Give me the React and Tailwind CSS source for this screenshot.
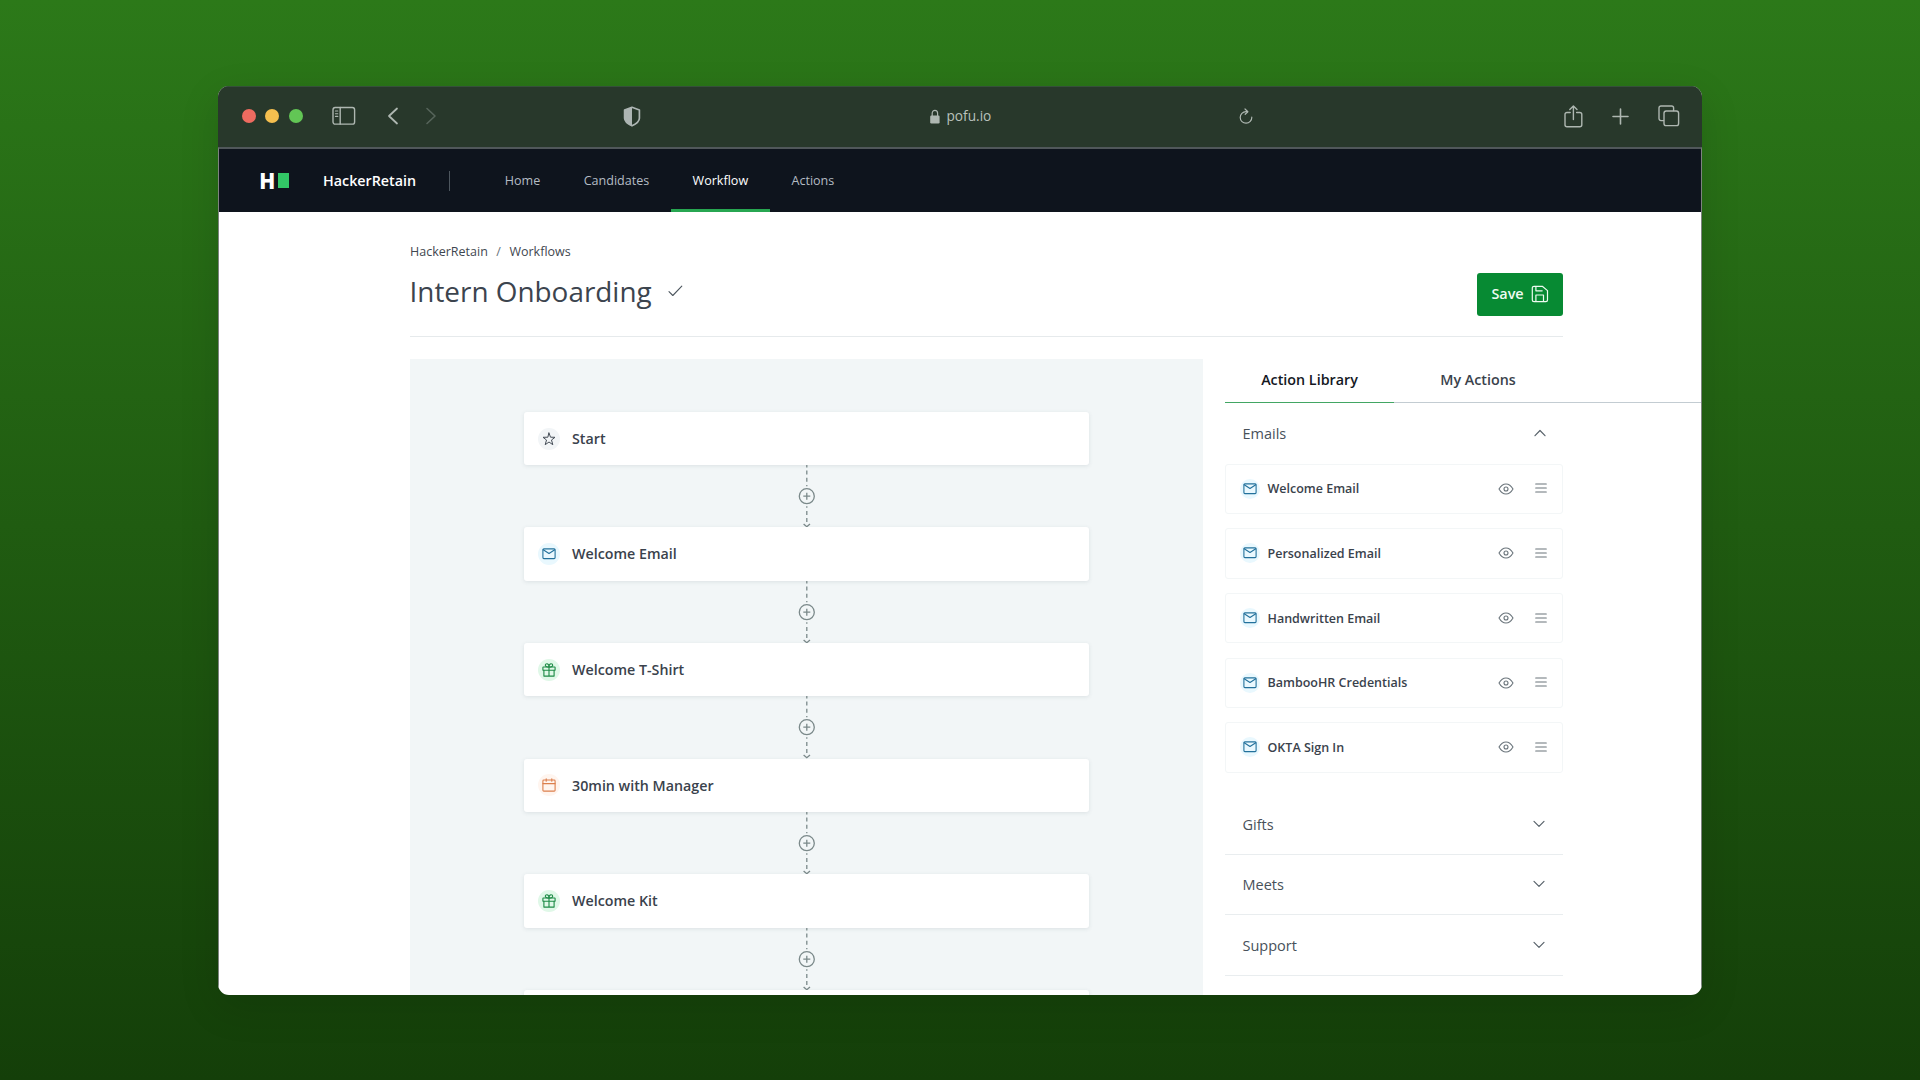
import React from "react";

const NAV = ["Home", "Candidates", "Workflow", "Actions"];

const STEPS = [
  { label: "Start", kind: "start" },
  { label: "Welcome Email", kind: "email" },
  { label: "Welcome T-Shirt", kind: "gift" },
  { label: "30min with Manager", kind: "meet" },
  { label: "Welcome Kit", kind: "gift" },
];

const EMAILS = [
  "Welcome Email",
  "Personalized Email",
  "Handwritten Email",
  "BambooHR Credentials",
  "OKTA Sign In",
];

const SECTIONS = ["Gifts", "Meets", "Support"];

function Icon({ w, h, sw = 1.2, className = "", children }) {
  return (
    <svg
      width={w}
      height={h}
      viewBox={`0 0 ${w} ${h}`}
      fill="none"
      stroke="currentColor"
      strokeWidth={sw}
      strokeLinecap="round"
      strokeLinejoin="round"
      className={`shrink-0 ${className}`}
    >
      {children}
    </svg>
  );
}

function MailIcon() {
  return (
    <Icon w={14} h={14} sw={1.1}>
      <rect x="0.9" y="1.9" width="12.2" height="9.7" rx="1" />
      <path d="M1.2 2.7 7 6.5l5.8-3.8" />
    </Icon>
  );
}

function GiftIcon() {
  return (
    <Icon w={14} h={14} sw={1.1}>
      <rect x="0.9" y="4" width="12.2" height="3.3" rx="0.4" />
      <path d="M1.9 7.3v5.8h10.2V7.3M7 4v9.1" />
      <path d="M7 4C5.8 4 3.3 3.9 3.3 2.2 3.3 1.2 4.1.7 4.9.7 6.3.7 7 2.4 7 4c0-1.6.7-3.3 2.1-3.3.8 0 1.6.5 1.6 1.5C10.7 3.9 8.2 4 7 4z" />
    </Icon>
  );
}

function CalendarIcon() {
  return (
    <Icon w={14} h={14} sw={1.1}>
      <rect x="0.9" y="2" width="12.2" height="11.1" rx="0.9" />
      <path d="M.9 5.6h12.2M4.2.7v2.5M9.8.7v2.5" />
    </Icon>
  );
}

function StarIcon() {
  return (
    <Icon w={14} h={14} sw={1}>
      <path d="M7 1 8.5 5.2 13 5.3 9.5 8l1.3 4.7L7 10l-3.8 2.7L4.5 8 1 5.3l4.5-.1z" />
    </Icon>
  );
}

const KINDS = {
  start: { el: <StarIcon />, cls: "bg-[#f2f5f7] text-[#464e58]" },
  email: { el: <MailIcon />, cls: "bg-[#e9f8fe] text-[#23719c]" },
  gift: { el: <GiftIcon />, cls: "bg-[#e0f8e8] text-[#1c8a45]" },
  meet: { el: <CalendarIcon />, cls: "bg-[#fff5ef] text-[#dc7f4c]" },
};

function Toolbar() {
  return (
    <div className="flex h-[61px] shrink-0 items-center justify-between border-t border-[#35503a] bg-[#28382b] pr-[22px] pb-[1.5px] pl-[24px] text-[#aeb7b1]">
      <div className="flex items-center">
        <div className="flex gap-[9.4px]">
          <span className="size-[14px] rounded-full bg-[#ee6b60]" />
          <span className="size-[14px] rounded-full bg-[#f5bf4f]" />
          <span className="size-[14px] rounded-full bg-[#62c655]" />
        </div>
        <Icon w={24} h={20} sw={1.4} className="ml-[29px]">
          <rect x="1" y="1.5" width="21.6" height="16.6" rx="2.2" />
          <path d="M8.2 1.5v16.6" />
          <path d="M3.4 5h2.4M3.4 7.7h2.4M3.4 10.4h2.4" strokeWidth="1.1" />
        </Icon>
        <Icon w={12} h={18} sw={1.8} className="ml-[31px]">
          <path d="M10 1.5 2 9l8 7.5" />
        </Icon>
        <Icon w={12} h={18} sw={1.6} className="ml-[26px] text-[#56645a]">
          <path d="M2 1.5 10 9l-8 7.5" />
        </Icon>
      </div>

      <svg width="18" height="21" viewBox="0 0 18 21" className="ml-[22px]">
        <path
          d="M9 1.3 16.4 4v8.2c0 3-3.3 5.6-7.4 7.6-4.1-2-7.4-4.6-7.4-7.6V4z"
          fill="none"
          stroke="#adb5b3"
          strokeWidth="1.7"
          strokeLinejoin="round"
        />
        <path d="M9 1.3v18.5c-4.1-2-7.4-4.6-7.4-7.6V4z" fill="#adb5b3" />
      </svg>

      <div className="ml-[126px] flex items-center gap-[6px] text-[13.7px] text-[#b9c1bc]">
        <svg width="10" height="15" viewBox="0 0 10 15" fill="#aeb7b1">
          <rect x="0.2" y="6.5" width="9.4" height="8" rx="1.2" />
          <path
            d="M2.2 7V4.2a2.7 2.9 0 0 1 5.4 0V7"
            fill="none"
            stroke="#aeb7b1"
            strokeWidth="1.2"
          />
        </svg>
        <span className="pt-px">pofu.io</span>
      </div>

      <Icon w={14} h={17} sw={1.2} className="mr-[147px] ml-[84px]">
        <path d="M12.8 9.2a5.8 5.8 0 1 1-5.8-5.6h1.4" />
        <path d="M6 1l2.9 2.7L6.2 6.3" />
      </Icon>

      <div className="flex items-center gap-[29px]">
        <Icon w={19} h={23} sw={1.4}>
          <path d="M6.2 7.5H3a2 2 0 0 0-2 2v10.3a2 2 0 0 0 2 2h12.8a2 2 0 0 0 2-2V9.5a2 2 0 0 0-2-2h-3.2" />
          <path d="M9.4 14.5V1.2M5.8 4.6l3.6-3.5L13 4.6" />
        </Icon>
        <Icon w={17} h={17} sw={1.6}>
          <path d="M8.5 1v15M1 8.5h15" />
        </Icon>
        <Icon w={22} h={22} sw={1.4}>
          <rect x="6" y="6" width="14.6" height="14.6" rx="2.2" />
          <path d="M5.6 15.6H3a2 2 0 0 1-2-2V3a2 2 0 0 1 2-2h10.6a2 2 0 0 1 2 2v2.6" />
        </Icon>
      </div>
    </div>
  );
}

function NavBar() {
  return (
    <nav className="flex h-[63px] shrink-0 items-center bg-[#0e141d] pl-[41px]">
      <div className="flex h-4 w-[29px] items-center justify-between">
        <span className="origin-left scale-x-[0.88] font-['Inter'] text-[22px] leading-4 font-black text-white">
          H
        </span>
        <span className="-ml-1 h-[15.5px] w-[11.5px] shrink-0 bg-[#32c766]" />
      </div>
      <span className="ml-[34px] text-[14.3px] font-semibold text-white">HackerRetain</span>
      <span className="ml-[33px] h-5 w-px bg-[#4d565e]" />
      <div className="ml-[33px] flex h-full">
        {NAV.map((n) => (
          <div
            key={n}
            className={`flex items-center border-b-[3px] px-[21.7px] pt-[5px] text-[12.55px] ${
              n === "Workflow" ? "border-[#27a651] text-white" : "border-transparent text-[#b4bcc4]"
            }`}
          >
            {n}
          </div>
        ))}
      </div>
    </nav>
  );
}

function Connector() {
  return (
    <svg
      width="20"
      height="62.3"
      viewBox="0 0 20 62.3"
      fill="none"
      stroke="#7b898a"
      strokeWidth="1.3"
      className="shrink-0"
    >
      <path d="M9.8 0v2.6M9.8 5.6v4M9.8 12.8v4M9.8 20v1.2M9.8 41.2v1.5M9.8 46v4M9.8 53v4" />
      <circle cx="9.8" cy="31.2" r="7.5" />
      <path d="M9.8 27.7v7M6.3 31.2h7" />
      <path d="M6.6 58.9 9.8 61.7l3.2-2.8" />
    </svg>
  );
}

function StepCard({ children }) {
  return (
    <div className="flex h-[53.3px] w-[565px] shrink-0 items-center gap-[12px] rounded-[3px] bg-white pl-[14px] shadow-[0_1px_4px_rgba(60,80,90,0.12)]">
      {children}
    </div>
  );
}

function Canvas() {
  return (
    <div className="flex w-[793px] shrink-0 flex-col items-center overflow-hidden bg-[#f2f6f7] pt-[53.3px]">
      {STEPS.map((s) => (
        <React.Fragment key={s.label}>
          <StepCard>
            <span
              className={`flex size-[22px] items-center justify-center rounded-full ${KINDS[s.kind].cls}`}
            >
              {KINDS[s.kind].el}
            </span>
            <span className="text-[14.25px] font-semibold text-[#3a424c]">{s.label}</span>
          </StepCard>
          <Connector />
        </React.Fragment>
      ))}
      <StepCard />
    </div>
  );
}

function Chevron({ up }) {
  return (
    <Icon w={12} h={8} sw={1.2} className="text-[#59636b]">
      <path d={up ? "M1 6.7 6 1.5l5 5.2" : "M1 1.3 6 6.3l5-5"} />
    </Icon>
  );
}

function LibraryItem({ label }) {
  return (
    <div className="flex h-[50.3px] items-center rounded-[3px] border border-[#f3f6f7] pr-[15px] pl-[14px]">
      <span className="flex size-5 items-center justify-center rounded-full bg-[#e9f8fe] text-[#23719c]">
        <MailIcon />
      </span>
      <span className="ml-[7.5px] flex-1 pt-[2px] text-[12.5px] font-semibold text-[#3a424c]">
        {label}
      </span>
      <Icon w={16} h={12} sw={1.1} className="text-[#6a747b]">
        <path d="M1 6C2.8 2.9 5.2 1 8 1s5.2 1.9 7 5c-1.8 3.1-4.2 5-7 5S2.8 9.1 1 6z" />
        <circle cx="8" cy="6" r="2" />
      </Icon>
      <Icon w={12} h={10} sw={1.1} className="mb-px ml-[21.5px] text-[#6a747b]">
        <path d="M.7 1h10.6M.7 5h10.6M.7 9h10.6" />
      </Icon>
    </div>
  );
}

function Sidebar() {
  return (
    <aside className="ml-[22px] flex flex-1 flex-col">
      <div className="flex h-[44px] shrink-0 text-[14.3px] font-semibold">
        <div className="flex w-[169px] items-center justify-center border-b-[1.5px] border-[#42a663] text-[#14181f]">
          Action Library
        </div>
        <div className="flex flex-1 border-b border-[#c3ccd2] text-[#3a424c]">
          <span className="flex w-[168px] items-center justify-center">My Actions</span>
        </div>
      </div>
      <div className="w-[338px] text-[14.5px] text-[#48515a]">
        <div className="flex h-[61px] items-center justify-between pr-[17px] pl-[17.5px]">
          <span className="pt-px">Emails</span>
          <Chevron up />
        </div>
        <div className="flex flex-col gap-[14.4px]">
          {EMAILS.map((e) => (
            <LibraryItem key={e} label={e} />
          ))}
        </div>
        <div className="pt-[21.5px]">
          {SECTIONS.map((s) => (
            <div
              key={s}
              className="flex h-[60.5px] items-center justify-between border-b border-[#e9edef] pr-[18px] pl-[17.5px]"
            >
              <span className="pt-px">{s}</span>
              <Chevron />
            </div>
          ))}
        </div>
      </div>
    </aside>
  );
}

export default function App() {
  return (
    <div className="flex h-[1080px] w-[1920px] justify-center overflow-hidden bg-linear-to-b from-[#2c7919] to-[#143f09] pt-[86px] font-['Open_Sans',sans-serif]">
      <div className="flex h-[909px] w-[1484px] flex-col overflow-hidden rounded-[11px] bg-white shadow-[0_12px_40px_rgba(0,0,0,0.12)]">
        <Toolbar />
        <div className="flex flex-1 flex-col overflow-hidden border-x border-t-2 border-x-[#7d837f] border-t-[#50575a]">
          <NavBar />
          <main className="flex min-h-0 flex-1 flex-col pl-[191px]">
            <header className="flex h-[125px] w-[1153px] shrink-0 items-start justify-between border-b border-[#e6eaec]">
              <div className="pt-[31px]">
                <div className="flex h-[18px] items-center text-[12.5px] text-[#3f4750]">
                  <span>HackerRetain</span>
                  <span className="mx-[8.5px] text-[#68727a]">/</span>
                  <span>Workflows</span>
                </div>
                <div className="mt-[11px] flex h-[38px] items-center">
                  <h1 className="-ml-[0.5px] pt-px text-[27.9px] text-[#3c444e]">
                    Intern Onboarding
                  </h1>
                  <Icon w={15} h={12} sw={1.1} className="ml-[16px] text-[#4c565e]">
                    <path d="M1 6.6 4.8 10.5 13.8 1.2" />
                  </Icon>
                </div>
              </div>
              <button className="mt-[61px] flex h-[42.5px] w-[86px] items-center justify-center gap-[7px] rounded-[3px] bg-[#078a33] text-[14.4px] font-semibold text-[#eefbf1]">
                Save
                <Icon w={18} h={18} sw={1.2}>
                  <path d="M3 1.3h8.3l5.2 4.3V15a1.7 1.7 0 0 1-1.7 1.7H3A1.7 1.7 0 0 1 1.3 15V3A1.7 1.7 0 0 1 3 1.3z" />
                  <path d="M4.9 1.5v4.3h6.3M4.9 16.5V10h7.6v6.5" />
                </Icon>
              </button>
            </header>
            <div className="mt-[21.6px] flex min-h-0 flex-1">
              <Canvas />
              <Sidebar />
            </div>
          </main>
        </div>
      </div>
    </div>
  );
}
